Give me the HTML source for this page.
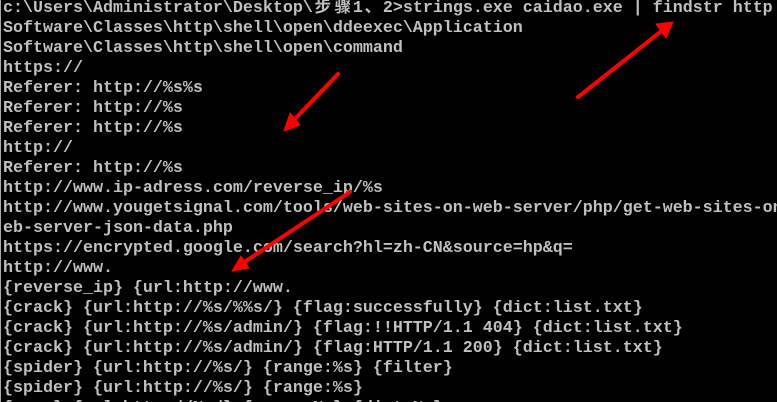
<!DOCTYPE html>
<html><head><meta charset="utf-8"><style>
html,body{margin:0;padding:0;background:#000;width:777px;height:402px;overflow:hidden}
#w{position:relative;width:777px;height:402px;overflow:hidden}
pre{position:absolute;left:3px;top:-1px;margin:0;font-family:"Liberation Mono","Noto Sans CJK SC",monospace;font-size:16.67px;line-height:20px;color:#c0c0c0;font-weight:bold;letter-spacing:0;white-space:pre}
.c{display:inline-block;width:20px;text-align:center}
.b{position:absolute;left:0;top:0;width:1px;height:402px;background:#aaa}
svg{position:absolute;left:0;top:0}
</style></head><body><div id="w">
<div class="b"></div>
<pre>c:\Users\Administrator\Desktop\<span class="c">步</span><span class="c">骤</span>1<span class="c">、</span>2&gt;strings.exe caidao.exe | findstr http
Software\Classes\http\shell\open\ddeexec\Application
Software\Classes\http\shell\open\command
https://
Referer: http://%s%s
Referer: http://%s
Referer: http://%s
http://
Referer: http://%s
http://www.ip-adress.com/reverse_ip/%s
http://www.yougetsignal.com/tools/web-sites-on-web-server/php/get-web-sites-on-w
eb-server-json-data.php
https://encrypted.google.com/search?hl=zh-CN&amp;source=hp&amp;q=
http://www.
{reverse_ip} {url:http://www.
{crack} {url:http://%s/%%s/} {flag:successfully} {dict:list.txt}
{crack} {url:http://%s/admin/} {flag:!!HTTP/1.1 404} {dict:list.txt}
{crack} {url:http://%s/admin/} {flag:HTTP/1.1 200} {dict:list.txt}
{spider} {url:http://%s/} {range:%s} {filter}
{spider} {url:http://%s/} {range:%s}
{scan} {url:http://%s/} {range:%s} {dict:%s}</pre>
<svg width="777" height="402">
<g stroke="#f00" stroke-width="4" stroke-linecap="round" fill="#f00">
<line x1="578" y1="97" x2="664" y2="29"/>
<polygon points="673,22 656,24 666,38" stroke-width="1"/>
<line x1="338" y1="74" x2="291" y2="123"/>
<polygon points="284,131 290,113 300,125" stroke-width="1"/>
<line x1="350" y1="192" x2="240" y2="265"/>
<polygon points="232,271 241,256 249,268" stroke-width="1"/>
</g></svg>
</div></body></html>
